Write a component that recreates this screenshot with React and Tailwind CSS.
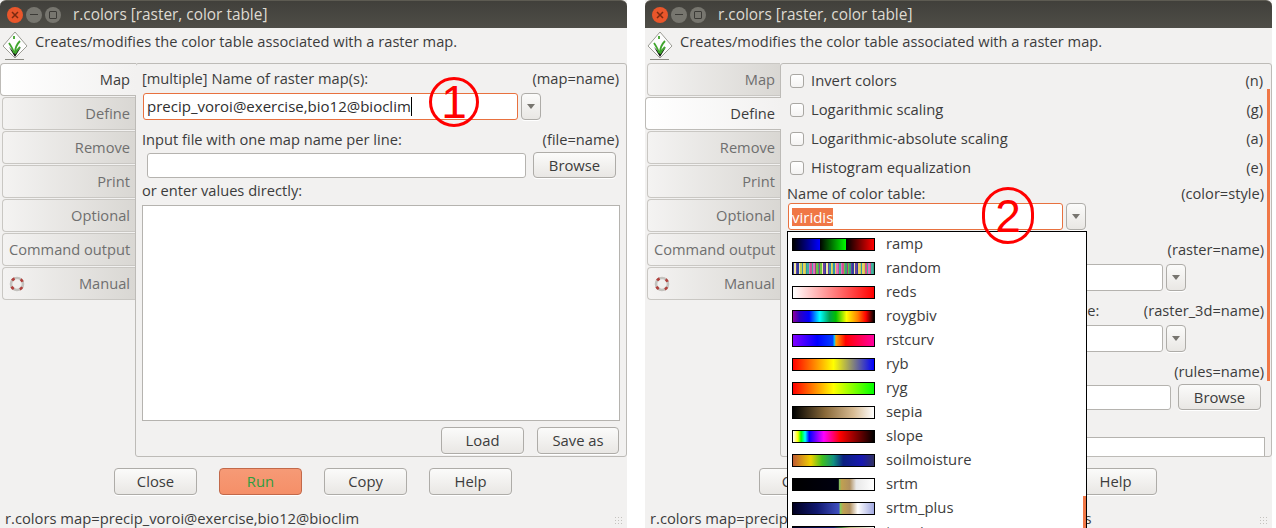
import React from 'react';

const tabs = ['Map', 'Define', 'Remove', 'Print', 'Optional', 'Command output', 'Manual'];

const stripes = ['#2f3f9f', '#3aa07a', '#d0508f', '#e8d060', '#6a3fa0', '#70c040', '#e070c0', '#2f8fb0', '#f0e8a0', '#a04080', '#40b0a0', '#c0d050'];
const randomBg = `linear-gradient(to right, ${Array.from({ length: 56 }, (_, i) => {
  const c = stripes[(i * 7 + (i % 5)) % stripes.length];
  return `${c} ${(i / 56) * 100}% ${((i + 1) / 56) * 100}%`;
}).join(', ')})`;

const tables = [
  { name: 'ramp', bg: 'bg-[linear-gradient(to_right,#000_0%,#0000ff_33%,#000_33%,#00ff00_66%,#000_66%,#ff0000_100%)]' },
  { name: 'random', random: true },
  { name: 'reds', bg: 'bg-[linear-gradient(to_right,#fff,#ff0000)]' },
  { name: 'roygbiv', bg: 'bg-[linear-gradient(to_right,#8b00a0_0%,#3000c0_8%,#0000ff_20%,#00ffff_33%,#00a050_45%,#00c000_53%,#ffff00_66%,#ff8000_80%,#ff0000_90%,#000_100%)]' },
  { name: 'rstcurv', bg: 'bg-[linear-gradient(to_right,#8000ff_0%,#0000ff_30%,#0040ff_49%,#00c0ff_51%,#ffa000_53%,#ff0000_65%,#ff00a0_100%)]' },
  { name: 'ryb', bg: 'bg-[linear-gradient(to_right,#ff0000,#ffff00_50%,#0000ff)]' },
  { name: 'ryg', bg: 'bg-[linear-gradient(to_right,#ff0000,#ffff00_50%,#00ff00)]' },
  { name: 'sepia', bg: 'bg-[linear-gradient(to_right,#000,#8a6a3a_40%,#d8bc94_75%,#fff)]' },
  { name: 'slope', bg: 'bg-[linear-gradient(to_right,#fff_0%,#ffff00_6%,#00ff00_10%,#00ffff_15%,#0000ff_20%,#ff00ff_38%,#ff0000_58%,#000_100%)]' },
  { name: 'soilmoisture', bg: 'bg-[linear-gradient(to_right,#c05a30_0%,#f0d000_22%,#40c020_36%,#109080_50%,#0a2080_62%,#1818b0_85%,#303060_100%)]' },
  { name: 'srtm', bg: 'bg-[linear-gradient(to_right,#000_0%,#000010_56%,#80c060_57%,#c0a050_60%,#b09060_70%,#e8e8e8_78%,#fff_100%)]' },
  { name: 'srtm_plus', bg: 'bg-[linear-gradient(to_right,#000020_0%,#101870_30%,#4050c0_57%,#80d060_58%,#c0a050_62%,#b09060_70%,#fff_80%,#a0a8e0_100%)]' },
  { name: 'terrain', bg: 'bg-[linear-gradient(to_right,#000020_0%,#101870_50%,#308030_60%,#c0c080_70%,#fff_100%)]' },
];

function Btn({ className = '', run, children }) {
  const tone = run
    ? 'border-[#c2694a] from-[#f69a76] to-[#f58f68] text-[#2f9e3f]'
    : 'border-[#aeaca8] from-[#fbfbfa] to-[#e9e7e4] text-[#3c3c3c]';
  return (
    <div className={`flex items-center justify-center rounded-[4px] border bg-gradient-to-b shadow-[0_1px_0_#fff] text-[14.8px] ${tone} ${className}`}>
      {children}
    </div>
  );
}

function Arrow() {
  return (
    <Btn className="ml-[3px] w-[20px] h-[27px]">
      <span className="w-0 h-0 border-x-[4px] border-x-transparent border-t-[5px] border-t-[#77756f]" />
    </Btn>
  );
}

function Input({ className = '', focus, children }) {
  return (
    <div className={`flex items-center rounded-[3px] border bg-white text-[15px] text-[#2e2e2e] ${focus ? 'border-[#e8713f]' : 'border-[#b5b3af]'} ${className}`}>
      {children}
    </div>
  );
}

function Row({ left, right, className = '' }) {
  return (
    <div className={`flex h-[20px] items-center justify-between whitespace-nowrap pt-[2px] ${className}`}>
      <span>{left}</span>
      <span>{right}</span>
    </div>
  );
}

function Check({ label, flag }) {
  return (
    <div className="flex h-[29px] items-center">
      <span className="ml-[3px] w-[14px] h-[14px] rounded-[3px] border border-[#a9a7a3] bg-gradient-to-b from-white to-[#f4f3f2]" />
      <span className="ml-[7px] flex-1 text-[14.8px]">{label}</span>
      <span className="mr-[1px]">{flag}</span>
    </div>
  );
}

function Grass() {
  return (
    <svg width="26" height="30" viewBox="0 0 26 30" className="ml-[2px] shrink-0">
      <path d="M13 1 L25 15 L13 27 L1 15 Z" fill="#fdfdfd" stroke="#9c9c94" strokeWidth="1" />
      <path d="M7 16 L13 26 L19 16 L13 22 Z" fill="#111" />
      <path d="M12 22 C11 18 9 15 7 12 M13 22 C13 18 14 14 18 10 M13 23 C14 20 16 18 18 16 M12 5 L12 8" stroke="#3fa52c" strokeWidth="1.8" fill="none" />
      <path d="M3 28.5 H22" stroke="#8b8b83" strokeWidth="1" />
    </svg>
  );
}

function Ring() {
  return (
    <svg width="16" height="16" viewBox="0 0 16 16" className="shrink-0">
      <circle cx="8" cy="8" r="6" fill="none" stroke="#c4c2be" strokeWidth="2.6" />
      <circle cx="8" cy="8" r="6" fill="none" stroke="#b0403c" strokeWidth="2.6" strokeDasharray="3 6.42" strokeDashoffset="-3.2" />
    </svg>
  );
}

function Tabs({ active }) {
  return (
    <div className="flex w-[136px] shrink-0 flex-col gap-[1px] relative z-10">
      {tabs.map((t) => (
        t === active ? (
          <div key={t} className="flex h-[33px] w-[136px] items-center justify-end whitespace-nowrap rounded-l-[4px] border border-r-0 border-[#bdbbb7] bg-gradient-to-r from-white to-[#f2f1f0] pr-[6px] text-[#3c3c3c]">
            {t}
          </div>
        ) : (
          <div key={t} className="ml-[2px] flex h-[33px] w-[133px] items-center justify-between whitespace-nowrap rounded-l-[4px] border border-r-0 border-[#c9c7c3] bg-gradient-to-r from-[#f4f3f2] to-[#d9d7d3] pr-[5px] pl-[6px] text-[#6f6f6f]">
            {t === 'Manual' ? <Ring /> : <span />}
            <span>{t}</span>
          </div>
        )
      ))}
    </div>
  );
}

function MapPanel() {
  return (
    <div className="pl-[6px] pr-[7px]">
      <Row className="mt-[4px]" left="[multiple] Name of raster map(s):" right="(map=name)" />
      <div className="mt-[5px] flex">
        <Input focus className="ml-[1px] h-[27px] w-[375px] pl-[3px]">
          <span className="whitespace-nowrap">precip_voroi@exercise,bio12@bioclim</span>
          <span className="h-[19px] w-[1px] bg-black" />
        </Input>
        <Arrow />
      </div>
      <Row className="mt-[9px]" left="Input file with one map name per line:" right="(file=name)" />
      <div className="mt-[3px] flex">
        <Input className="ml-[5px] mt-[1px] h-[25px] w-[379px]" />
        <Btn className="ml-[7px] h-[26px] w-[83px]">Browse</Btn>
      </div>
      <Row className="mt-[2px]" left="or enter values directly:" />
      <div className="mt-[5px] h-[216px] w-[478px] border border-[#b5b3af] bg-white" />
      <div className="mt-[6px] flex w-[478px] justify-end gap-[13px] pr-[1px]">
        <Btn className="h-[27px] w-[83px]">Load</Btn>
        <Btn className="h-[27px] w-[82px]">Save as</Btn>
      </div>
    </div>
  );
}

function DefinePanel() {
  return (
    <div className="pl-[6px] pr-[7px]">
      <div className="mt-[2px]">
        <Check label="Invert colors" flag="(n)" />
        <Check label="Logarithmic scaling" flag="(g)" />
        <Check label="Logarithmic-absolute scaling" flag="(a)" />
        <Check label="Histogram equalization" flag="(e)" />
      </div>
      <Row className="mt-[1px]" left="Name of color table:" right="(color=style)" />
      <div className="flex">
        <Input focus className="ml-[1px] h-[27px] w-[275px] pl-[3px]">
          <span className="bg-[#f07746] leading-[18px] text-white">viridis</span>
        </Input>
        <Arrow />
      </div>
      <Row className="mt-[9px]" left="Raster map from which to copy color table:" right="(raster=name)" />
      <div className="mt-[5px] flex">
        <Input className="ml-[1px] h-[27px] w-[375px]" />
        <Arrow />
      </div>
      <Row className="mt-[9px]" left="3D raster map from which to copy color table:" right="(raster_3d=name)" />
      <div className="mt-[5px] flex">
        <Input className="ml-[1px] h-[27px] w-[375px]" />
        <Arrow />
      </div>
      <Row className="mt-[9px]" left="Path to rules file:" right="(rules=name)" />
      <div className="mt-[3px] flex">
        <Input className="ml-[5px] mt-[1px] h-[25px] w-[379px]" />
        <Btn className="ml-[7px] h-[26px] w-[83px]">Browse</Btn>
      </div>
      <Row className="mt-[7px]" left="or enter values directly:" />
      <div className="h-[216px] w-[478px] border border-[#b5b3af] bg-white" />
    </div>
  );
}

function ColorMenu() {
  return (
    <div className="absolute left-[142px] top-[231px] bottom-0 z-20 w-[300px] overflow-hidden border border-b-0 border-black bg-white text-[14.8px] text-[#3c3c3c]">
      {tables.map((t) => (
        <div key={t.name} className="flex h-[24px] items-center pl-[4px]">
          {t.random ? (
            <span className="h-[13px] w-[83px] border border-black" style={{ background: randomBg }} />
          ) : (
            <span className={`h-[13px] w-[83px] border border-black ${t.bg}`} />
          )}
          <span className="ml-[11px] mb-[2px]">{t.name}</span>
        </div>
      ))}
      <div className="absolute right-0 top-[264px] h-[40px] w-[3px] bg-[#f07746]" />
    </div>
  );
}

function Window({ active, command, children }) {
  return (
    <div className="relative flex h-[528px] w-[627px] shrink-0 flex-col overflow-hidden bg-[#f2f1f0] text-[14.65px] text-[#3c3c3c]">
      <div className="flex h-[28px] shrink-0 items-center rounded-t-[6px] border-t border-[#5d5b52] bg-gradient-to-b from-[#41403b] to-[#4e4d47]">
        <div className="ml-[7px] flex h-[16px] w-[16px] items-center justify-center rounded-full bg-[#e9562b] text-[#7a2a10]">
          <svg width="8" height="8" viewBox="0 0 8 8"><path d="M1 1 L7 7 M7 1 L1 7" stroke="currentColor" strokeWidth="1.5" /></svg>
        </div>
        <div className="ml-[3px] flex h-[16px] w-[16px] items-center justify-center rounded-full bg-[#77766f] text-[#3c3b37]">
          <span className="h-[1px] w-[8px] bg-current" />
        </div>
        <div className="ml-[3px] flex h-[16px] w-[16px] items-center justify-center rounded-full bg-[#77766f]">
          <span className="h-[8px] w-[8px] rounded-[1px] border border-[#3c3b37]" />
        </div>
        <span className="ml-[12px] whitespace-nowrap text-[15.4px] font-medium text-[#dfdbd2]">r.colors [raster, color table]</span>
      </div>
      <div className="flex h-[35px] shrink-0 items-center">
        <Grass />
        <span className="ml-[7px] mb-[8px] whitespace-nowrap">Creates/modifies the color table associated with a raster map.</span>
      </div>
      <div className="flex h-[394px] shrink-0">
        <Tabs active={active} />
        <div className="-ml-[1px] h-full w-[492px] overflow-hidden rounded-[3px] border border-[#bdbbb7]">
          {children}
        </div>
      </div>
      <div className="ml-[114px] mt-[11px] flex gap-[22px]">
        <Btn className="h-[27px] w-[83px]">Close</Btn>
        <Btn run className="h-[27px] w-[83px]">Run</Btn>
        <Btn className="h-[27px] w-[83px]">Copy</Btn>
        <Btn className="h-[27px] w-[83px]">Help</Btn>
      </div>
      <div className="mt-[12px] pl-[5px] whitespace-nowrap text-[14.75px]">{command}</div>
      <span className="absolute bottom-[2px] right-[3px] h-[10px] w-[10px] bg-[radial-gradient(#c4c2be_1px,transparent_1px)] bg-[length:3px_3px]" />
    </div>
  );
}

function Callout({ className, children }) {
  return (
    <div className={`absolute z-30 flex items-center justify-center rounded-full border-[3px] border-[#f00] font-['Liberation_Sans',sans-serif] text-[46px] leading-none text-[#f00] ${className}`}>
      {children}
    </div>
  );
}

export default function App() {
  return (
    <div className="flex h-[528px] w-[1276px] gap-[18px] overflow-hidden bg-white font-['Open_Sans',sans-serif]">
      <Window active="Map" command="r.colors map=precip_voroi@exercise,bio12@bioclim">
        <MapPanel />
        <Callout className="left-[429px] top-[77px] h-[50px] w-[50px]">1</Callout>
      </Window>
      <Window active="Define" command="r.colors map=precip_voroi@exercise,bio12@bioclim color=viridis">
        <DefinePanel />
        <ColorMenu />
        <Callout className="left-[337px] top-[187px] h-[57px] w-[52px]">2</Callout>
      </Window>
      <div className="absolute left-[1267px] top-[89px] h-[292px] w-[3px] bg-[#f07746]" />
    </div>
  );
}
